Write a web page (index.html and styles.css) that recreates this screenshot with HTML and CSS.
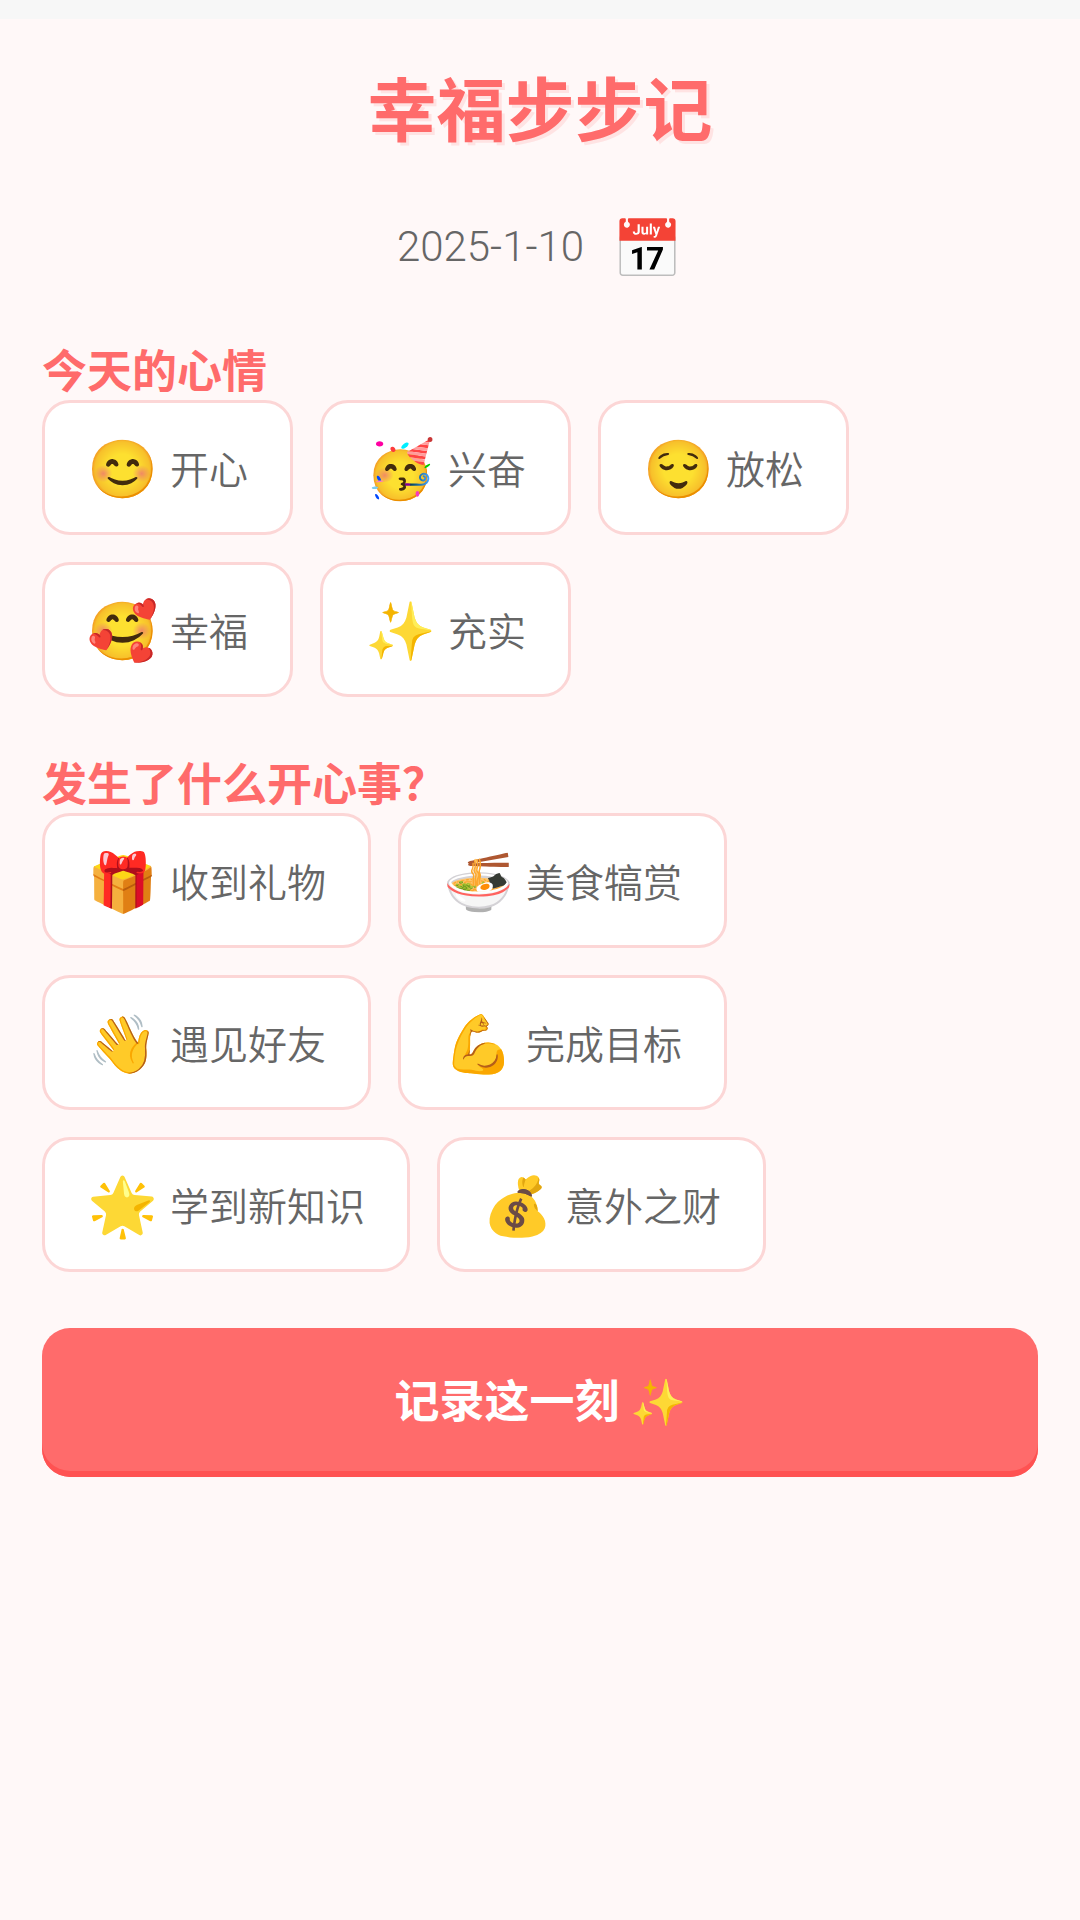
FILE: index.html
```html
<!DOCTYPE html>
<html lang="zh-CN">
<head>
<meta charset="utf-8">
<meta name="viewport" content="width=device-width, initial-scale=1">
<title>幸福步步记</title>
<link rel="stylesheet" href="styles.css">
</head>
<body>
<main class="page">
  <h1 class="title">幸福步步记</h1>
  <div class="date-row">
    <time class="date" datetime="2025-01-10">2025-1-10</time>
    <button class="calendar" type="button" aria-label="选择日期">📅</button>
  </div>
  <section class="section">
    <h2 class="heading">今天的心情</h2>
    <div class="chips">
      <button class="chip" type="button"><span class="emoji">😊</span><span>开心</span></button>
      <button class="chip" type="button"><span class="emoji">🥳</span><span>兴奋</span></button>
      <button class="chip" type="button"><span class="emoji">😌</span><span>放松</span></button>
      <button class="chip" type="button"><span class="emoji">🥰</span><span>幸福</span></button>
      <button class="chip" type="button"><span class="emoji">✨</span><span>充实</span></button>
    </div>
  </section>
  <section class="section">
    <h2 class="heading">发生了什么开心事？</h2>
    <div class="chips chips-events">
      <button class="chip" type="button"><span class="emoji">🎁</span><span>收到礼物</span></button>
      <button class="chip" type="button"><span class="emoji">🍜</span><span>美食犒赏</span></button>
      <button class="chip" type="button"><span class="emoji">👋</span><span>遇见好友</span></button>
      <button class="chip" type="button"><span class="emoji">💪</span><span>完成目标</span></button>
      <button class="chip" type="button"><span class="emoji">🌟</span><span>学到新知识</span></button>
      <button class="chip" type="button"><span class="emoji">💰</span><span>意外之财</span></button>
    </div>
  </section>
  <button class="submit" type="button">记录这一刻 ✨</button>
</main>
</body>
</html>
```
FILE: styles.css
```css
* {
  box-sizing: border-box;
}

body {
  margin: 0;
  min-height: 100vh;
  border-top: 19px solid #f7f7f7;
  background: #fff8f8;
  color: #666;
  font-family: "Noto Sans CJK SC", sans-serif;
}

button {
  margin: 0;
  font-family: inherit;
  color: inherit;
  cursor: pointer;
}

.page {
  padding: 37px 42px;
}

.title {
  margin: 0 0 48px;
  color: #ff6b6b;
  font-size: 69px;
  line-height: 100px;
  text-align: center;
  text-shadow: 3px 3px 0 #ffe3e3;
}

.date-row {
  display: flex;
  justify-content: center;
  align-items: center;
  gap: 28px;
  height: 80px;
  margin-bottom: 56px;
}

.date {
  padding-top: 6px;
  font-family: Roboto, sans-serif;
  font-size: 42px;
  font-weight: 350;
  line-height: 60px;
}

.calendar {
  padding: 0;
  border: 0;
  background: none;
  font-size: 57px;
  line-height: 76px;
}

.section {
  margin-bottom: 56px;
}

.heading {
  margin: 0;
  color: #ff6b6b;
  font-size: 45px;
  line-height: 58px;
  padding-bottom: 2px;
}

.chips {
  display: flex;
  flex-wrap: wrap;
  gap: 27px;
}

.chips-events {
  max-width: 840px;
}

.chip {
  display: flex;
  align-items: center;
  gap: 12px;
  height: 135px;
  padding: 0 42px 2px;
  border: 3px solid #fcd6d6;
  border-radius: 28px;
  background: #fff;
  font-size: 39px;
  font-weight: 350;
  line-height: 60px;
}

.emoji {
  padding-bottom: 6px;
  font-size: 57px;
}

.submit {
  display: block;
  width: 100%;
  height: 149px;
  padding: 0 0 8px;
  border: 0;
  border-radius: 28px;
  background: #ff6b6b;
  box-shadow: inset 0 -6px 0 #ff5252;
  color: #fff;
  font-size: 45px;
  font-weight: 700;
  line-height: 60px;
}
```
